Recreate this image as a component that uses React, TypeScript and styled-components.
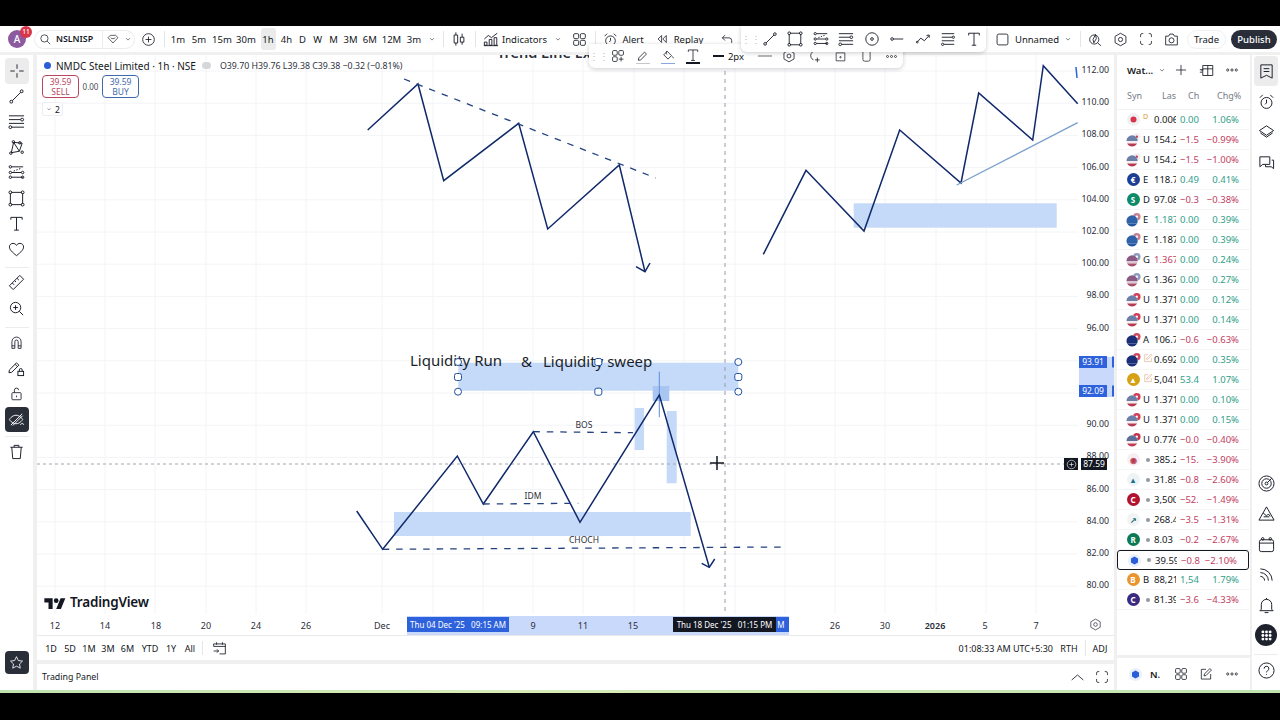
import React from 'react';
import styled, { createGlobalStyle } from 'styled-components';

const INK = '#131722';
const GREY = '#787b86';
const GREEN = '#2f9e8a';
const RED = '#c2405f';
const NAVY = '#10296b';
const ZONE = '#c5d9f8';

const GlobalStyle = createGlobalStyle`
  html, body { margin: 0; padding: 0; background: #000; }
  body { font-family: "Noto Sans", "Liberation Sans", sans-serif; color: ${INK}; }
  * { box-sizing: border-box; }
`;

const Screen = styled.div`
  position: relative;
  width: 1280px;
  height: 720px;
  display: flex;
  flex-direction: column;
  background: #000;
  overflow: hidden;
`;

const BlackBar = styled.div<{ $h: number }>`
  flex: none;
  height: ${(p) => p.$h}px;
  background: #000;
`;

const Workspace = styled.div`
  flex: none;
  height: 664px;
  display: flex;
  flex-direction: column;
  background: #f0f0f0;
`;

const GreenEdge = styled.div`
  flex: none;
  height: 3px;
  background: linear-gradient(90deg, #bfe3b0, #d9ecb8 40%, #bfe3b0);
`;

/* header */
const Header = styled.header`
  flex: none;
  height: 26px;
  display: flex;
  align-items: center;
  background: #fff;
  font-size: 9.5px;
  margin-bottom: 3px;
`;

const Slot = styled.div<{ $w: number; $left?: number }>`
  flex: none;
  width: ${(p) => p.$w}px;
  margin-left: ${(p) => p.$left ?? 0}px;
  height: 100%;
  display: flex;
  align-items: center;
  justify-content: center;
  white-space: nowrap;
`;

const Divider = styled.span`
  width: 1px;
  height: 16px;
  background: #e4e5e8;
`;

const Avatar = styled.div`
  position: relative;
  width: 18px;
  height: 18px;
  border-radius: 50%;
  background: #8b5a9f;
  color: #fff;
  font-size: 10px;
  font-weight: 500;
  display: flex;
  align-items: center;
  justify-content: center;
`;

const AvatarBadge = styled.span`
  position: absolute;
  top: -4px;
  right: -6px;
  width: 12px;
  height: 12px;
  border-radius: 50%;
  background: #d8344a;
  color: #fff;
  font-size: 6.5px;
  line-height: 12px;
  text-align: center;
`;

const SearchPill = styled.div`
  flex: none;
  width: 101px;
  height: 19px;
  display: flex;
  align-items: center;
  border: 1px solid #ececef;
  border-radius: 10px;
`;

const Symbol = styled.b`
  font-size: 8.8px;
  font-weight: 600;
  width: 46px;
`;

const PillSep = styled.span`
  width: 1px;
  height: 100%;
  background: #ececef;
`;

const TimeframeRow = styled.div`
  flex: none;
  width: 257px;
  display: flex;
  align-items: center;
`;

const Timeframe = styled.div<{ $w: number; $active?: boolean }>`
  flex: none;
  width: ${(p) => p.$w}px;
  margin: 0 ${(p) => (p.$active ? 2.5 : 0)}px;
  height: 22px;
  display: flex;
  align-items: center;
  justify-content: center;
  border-radius: 3px;
  background: ${(p) => (p.$active ? '#ebebeb' : 'transparent')};
`;

const TradePill = styled.div`
  flex: none;
  width: 39px;
  height: 19px;
  margin-left: 1px;
  border: 1px solid #eff0f2;
  border-radius: 10px;
  display: flex;
  align-items: center;
  justify-content: center;
`;

const PublishPill = styled.div`
  flex: none;
  width: 46px;
  height: 19px;
  margin-left: 5px;
  border-radius: 10px;
  background: #2a2e39;
  color: #fff;
  font-weight: 500;
  display: flex;
  align-items: center;
  justify-content: center;
`;

/* floating toolbars */
const FloatBar = styled.div<{ $x: number; $y: number; $w: number; $h: number; $z: number }>`
  position: absolute;
  left: ${(p) => p.$x}px;
  top: ${(p) => p.$y}px;
  width: ${(p) => p.$w}px;
  height: ${(p) => p.$h}px;
  z-index: ${(p) => p.$z};
  display: flex;
  align-items: center;
  background: #fff;
  border-radius: 0 0 6px 6px;
  box-shadow: 0 1px 4px rgba(19, 23, 34, 0.22);
  font-size: 9.5px;
`;

const Grip = styled.span<{ $w: number }>`
  flex: none;
  width: ${(p) => p.$w}px;
  text-align: center;
  color: #b8bac2;
  font-size: 10px;
  line-height: 6px;
`;

const BarCell = styled.div<{ $w: number }>`
  flex: none;
  width: ${(p) => p.$w}px;
  height: 100%;
  display: flex;
  align-items: center;
  justify-content: center;
  gap: 4px;
`;

const ColorTool = styled.div`
  display: flex;
  flex-direction: column;
  align-items: center;
  gap: 0;
`;

const ColorWave = styled.span<{ $color: string; $h: number }>`
  display: block;
  width: 14px;
  height: ${(p) => p.$h}px;
  background: ${(p) => p.$color};
`;

const StrokeSample = styled.span<{ $w: number; $muted?: boolean }>`
  display: block;
  width: ${(p) => p.$w}px;
  height: 2px;
  background: ${(p) => (p.$muted ? '#b4b6bc' : INK)};
`;

/* body */
const Body = styled.div`
  flex: 1;
  min-height: 0;
  display: flex;
`;

const LeftRail = styled.nav`
  flex: none;
  width: 33px;
  margin-right: 4px;
  padding-top: 3px;
  display: flex;
  flex-direction: column;
  align-items: center;
  background: #fff;
`;

const RailTool = styled.div<{ $state?: 'active' | 'dark' }>`
  flex: none;
  width: 24px;
  height: 25.5px;
  display: flex;
  align-items: center;
  justify-content: center;
  border-radius: 4px;
  background: ${(p) => (p.$state === 'active' ? '#ececec' : p.$state === 'dark' ? '#2a2e39' : 'transparent')};
  color: ${(p) => (p.$state === 'dark' ? '#fff' : INK)};
`;

const RailSep = styled.div<{ $before: number; $after: number }>`
  flex: none;
  width: 24px;
  height: 1px;
  margin: ${(p) => p.$before}px 0 ${(p) => p.$after}px;
  background: #ececee;
`;

const StarTool = styled(RailTool)`
  margin-top: auto;
  margin-bottom: 16px;
  height: 23px;
`;

const Center = styled.main`
  flex: none;
  width: 1077px;
  display: flex;
  flex-direction: column;
`;

const ChartPane = styled.section`
  flex: none;
  height: 581px;
  display: flex;
  flex-direction: column;
  background: #fff;
`;

const Canvas = styled.div`
  position: relative;
  flex: 1;
  min-height: 0;
  overflow: hidden;
`;

const ChartSvg = styled.svg`
  position: absolute;
  inset: 0;
  width: 100%;
  height: 100%;
  font-family: "Noto Sans", sans-serif;
`;

const Legend = styled.div`
  position: absolute;
  left: 5px;
  top: 4px;
  display: flex;
  flex-direction: column;
  align-items: flex-start;
`;

const LegendTitle = styled.div`
  display: flex;
  align-items: center;
  height: 13px;
  font-size: 10px;
  white-space: nowrap;
`;

const LegendDot = styled.span`
  width: 7px;
  height: 7px;
  margin: 0 5px 0 2px;
  border-radius: 50%;
  background: #2a5ed8;
`;

const LegendPill = styled.span`
  width: 9px;
  height: 7px;
  margin: 0 9px 0 6px;
  border-radius: 4px;
  background: #d6d7da;
`;

const Ohlc = styled.span`
  font-size: 8.8px;
  color: #2f3340;
`;

const QuoteRow = styled.div`
  display: flex;
  align-items: center;
  margin-top: 3px;
`;

const QuoteBox = styled.div<{ $color: string }>`
  width: 37px;
  height: 23px;
  border: 1px solid ${(p) => p.$color};
  border-radius: 4px;
  background: #fff;
  color: ${(p) => p.$color};
  font-size: 8.5px;
  line-height: 10px;
  padding-top: 1px;
  text-align: center;
`;

const QuoteSpread = styled.span`
  width: 23px;
  text-align: center;
  font-size: 8px;
  color: #4a4e5a;
`;

const Collapse = styled.div`
  display: flex;
  align-items: center;
  justify-content: center;
  gap: 2px;
  width: 21px;
  height: 14px;
  margin-top: 4px;
  border: 1px solid #eceef2;
  border-radius: 2px;
  background: #fff;
  font-size: 8.5px;
`;

const Logo = styled.div`
  position: absolute;
  left: 7px;
  bottom: 3px;
  display: flex;
  align-items: center;
  gap: 4px;
  font-size: 13.5px;
  font-weight: 600;
  letter-spacing: -0.2px;
  color: #131722;
`;

const PriceTick = styled.span`
  position: absolute;
  right: 5px;
  transform: translateY(-50%);
  font-size: 8.8px;
  color: #2a2e39;
  background: #fff;
`;

const PriceBand = styled.div`
  position: absolute;
  left: 1042px;
  width: 35px;
  top: 302px;
  height: 40px;
  background: #c9d9fb;
`;

const PriceTag = styled.span<{ $dark?: boolean; $top: number }>`
  position: absolute;
  top: ${(p) => p.$top}px;
  left: ${(p) => (p.$dark ? 1044 : 1042)}px;
  width: ${(p) => (p.$dark ? 26 : 28)}px;
  height: 12px;
  transform: translateY(-50%);
  background: ${(p) => (p.$dark ? '#131722' : '#2e62dc')};
  color: #fff;
  font-size: 8.5px;
  line-height: 12px;
  text-align: center;
`;

const PriceEdge = styled.span<{ $top: number }>`
  position: absolute;
  top: ${(p) => p.$top}px;
  left: 1075px;
  width: 2px;
  height: 11px;
  transform: translateY(-50%);
  background: #2e62dc;
`;

const PlusTag = styled.span`
  position: absolute;
  left: 1027px;
  top: 403px;
  width: 14px;
  height: 12px;
  background: #131722;
  color: #fff;
  display: flex;
  align-items: center;
  justify-content: center;
`;

const TimeAxis = styled.div`
  position: relative;
  flex: none;
  height: 22px;
  border-bottom: 1px solid #e8e9ec;
  font-size: 9px;
  color: #2a2e39;
`;

const TimeBand = styled.div`
  position: absolute;
  left: 370px;
  width: 382px;
  top: 2px;
  bottom: 0;
  background: #c9d9fb;
`;

const TimeTick = styled.span<{ $bold?: boolean }>`
  position: absolute;
  top: 11px;
  transform: translate(-50%, -50%);
  font-weight: ${(p) => (p.$bold ? 600 : 400)};
  white-space: nowrap;
`;

const TimeTag = styled.span<{ $dark?: boolean; $x: number; $w: number }>`
  position: absolute;
  left: ${(p) => p.$x}px;
  width: ${(p) => p.$w}px;
  top: 3px;
  height: 15px;
  background: ${(p) => (p.$dark ? '#131722' : '#2e62dc')};
  color: #fff;
  font-size: 8px;
  line-height: 15px;
  text-align: center;
  white-space: pre;
  overflow: hidden;
`;

const AxisGear = styled.span`
  position: absolute;
  left: 1052px;
  top: 4px;
`;

const RangeBar = styled.div`
  flex: none;
  height: 24px;
  display: flex;
  align-items: center;
  padding-left: 4.5px;
  background: #fff;
  font-size: 9px;
  margin-bottom: 4px;
`;

const RangeButton = styled.span<{ $w: number }>`
  flex: none;
  width: ${(p) => p.$w}px;
  text-align: center;
`;

const RangeSep = styled.span`
  width: 1px;
  height: 14px;
  margin: 0 9px 0 1.5px;
  background: #e4e5e8;
`;

const RangeRight = styled.div`
  margin-left: auto;
  display: flex;
  align-items: center;
  height: 100%;
  font-size: 9px;
`;

const TradingPanel = styled.div`
  flex: 1;
  display: flex;
  align-items: center;
  padding: 0 5px;
  background: #fff;
  font-size: 8.8px;
`;

const PanelActions = styled.div`
  margin-left: auto;
  display: flex;
  align-items: center;
  gap: 10px;
`;

/* watchlist */
const Watch = styled.aside`
  flex: none;
  width: 133px;
  margin-left: 3px;
  display: flex;
  flex-direction: column;
`;

const WatchMain = styled.div`
  flex: 1;
  min-height: 0;
  background: #fff;
`;

const WatchHead = styled.div`
  height: 30px;
  display: flex;
  align-items: center;
  font-size: 9.5px;
`;

const WatchTitle = styled.b`
  font-weight: 600;
`;

const WatchColumns = styled.div`
  position: relative;
  height: 25px;
  padding-bottom: 3px;
  display: flex;
  align-items: center;
  font-size: 9px;
  color: ${GREY};
  border-bottom: 1px solid #f1f2f4;
`;

const ColumnLabel = styled.span<{ $x: number }>`
  position: absolute;
  left: ${(p) => p.$x}px;
  white-space: nowrap;
`;

const Row = styled.div<{ $selected?: boolean }>`
  position: relative;
  height: 20px;
  display: grid;
  grid-template-columns: 8px 16px 13px 22px 4px 19px 1fr 11px;
  align-items: center;
  font-size: 9.5px;
  border-bottom: 1px solid #f5f6f7;
  ${(p) =>
    p.$selected
      ? `border: 1px solid #131722; border-radius: 3px; margin: 0 1px 0 0;`
      : ''}
`;

const IconCell = styled.div`
  grid-column: 2;
  display: flex;
  align-items: center;
  justify-content: center;
`;

const SymCell = styled.span`
  padding-left: 2px;
  overflow: hidden;
  white-space: nowrap;
`;

const Bullet = styled.span`
  display: block;
  width: 4px;
  height: 4px;
  margin-left: 3px;
  border-radius: 50%;
  background: #9598a1;
`;

const DelayMark = styled.sup`
  color: #d99a2b;
  font-size: 7px;
`;

const NoteMark = styled.span`
  display: block;
  color: #d9a27a;
`;

const Num = styled.span<{ $color?: string }>`
  overflow: hidden;
  white-space: nowrap;
  color: ${(p) => p.$color ?? INK};
`;

const Change = styled(Num)`
  grid-column: 6;
`;

const Pct = styled(Num)`
  grid-column: 7;
  text-align: right;
`;

const Coin = styled.span<{ $bg: string; $fg?: string }>`
  width: 13px;
  height: 13px;
  border-radius: 50%;
  background: ${(p) => p.$bg};
  color: ${(p) => p.$fg ?? '#fff'};
  font-size: 8px;
  font-weight: 700;
  line-height: 13px;
  text-align: center;
  display: flex;
  align-items: center;
  justify-content: center;
`;

const WatchFoot = styled.div`
  flex: none;
  height: 32px;
  margin-top: 3px;
  background: #fff;
  display: flex;
  align-items: center;
  font-size: 9.5px;
  font-weight: 600;
`;

const RightRail = styled.nav`
  flex: none;
  width: 28px;
  margin-left: 2px;
  padding: 1px 0 4px;
  display: flex;
  flex-direction: column;
  align-items: center;
  background: #fff;
`;

const RightTool = styled.div<{ $active?: boolean }>`
  flex: none;
  width: 24px;
  height: 30.4px;
  display: flex;
  align-items: center;
  justify-content: center;
  border-radius: 4px;
  background: ${(p) => (p.$active ? '#ececec' : 'transparent')};
`;

const RailSpacer = styled.div`
  flex: 1;
`;

const DarkCircle = styled.span`
  width: 22px;
  height: 22px;
  border-radius: 50%;
  background: #1e222d;
  color: #fff;
  display: flex;
  align-items: center;
  justify-content: center;
`;

/* icons */
const circles = (pts: number[][], r = 1.5) =>
  pts.map(([cx, cy]) => <circle key={`${cx}-${cy}`} cx={cx} cy={cy} r={r} />);

const glyphs: Record<string, React.ReactNode> = {
  crosshair: <path d="M9 1.5v5M9 11.5v5M1.5 9h5M11.5 9h5" />,
  line: <><path d="M4.5 13.5l9-9" />{circles([[3.5, 14.5], [14.5, 3.5]])}</>,
  fork: <><path d="M1 3h16M1 7h12.5M1 11h16M4 15h13" />{circles([[15, 7], [2.5, 15]])}</>,
  pattern: <><path d="M3.5 14.5L6 3.5l6 9.5 3-8.5M3.5 14.5l8.5-1.5M6 3.5l9 1" />{circles([[3, 15], [5.7, 3], [12.5, 4], [15, 14]], 1.3)}</>,
  fib: <><path d="M4 3h12M4 9h10M4 14h12" /><path d="M6 7.5l8-3" strokeDasharray="1.5 1.5" />{circles([[2.5, 3], [15.5, 9], [2.5, 9], [2.5, 14], [15.5, 14]], 1.3)}</>,
  rect: <><path d="M3.5 2.5h11M3.5 15.5h11M2.5 3.5v11M15.5 3.5v11" />{circles([[2.5, 2.5], [15.5, 2.5], [2.5, 15.5], [15.5, 15.5]])}</>,
  text: <path d="M3 5V2.5h12V5M9 2.5V16M6.5 16h5" />,
  heart: <path d="M9 15.5C4 11.5 1.5 9 1.5 6.3 1.5 4 3.3 2.5 5.3 2.5c1.5 0 2.9.8 3.7 2.2.8-1.4 2.2-2.2 3.7-2.2 2 0 3.8 1.5 3.8 3.8 0 2.7-2.5 5.2-7.5 9.2z" />,
  ruler: <path d="M1.5 12.5l11-11 4 4-11 11zM4.5 9.5l2 2M7 7l1.5 1.5M9.5 4.5l2 2" />,
  zoomIn: <><circle cx="8" cy="8" r="5.5" /><path d="M12 12l4 4M8 5.5v5M5.5 8h5" /></>,
  magnet: <path d="M3.5 16V8a5.5 5.5 0 0 1 11 0v8H11V8a2 2 0 0 0-4 0v8zM3.5 13H7M11 13h3.5" />,
  pencilLock: <><path d="M1.5 10.5L9 3l2.5 2.5L4 13l-3 .5zM7.5 4.5L10 7" /><rect x="10.5" y="12" width="6" height="4.5" /><path d="M12 12v-1.5a1.5 1.5 0 0 1 3 0V12" /></>,
  lockOpen: <><rect x="3.5" y="8" width="11" height="8.5" rx="1" /><path d="M6.5 8V5a2.5 2.5 0 0 1 5 0M9 11.5v2" /></>,
  eyeOff: <><path d="M1.5 9s2.500-4.500 7-4.500 7 4.500 7 4.500-2.500 4.500-7 4.500-7-4.500-7-4.500zM3 15L15 3M5 15.500L15.500 5" /><path d="M13 14.500c1 0 1-1.500 2-1.500s1 1.500 2 1.500" /></>,
  trash: <path d="M2.500 4.500h13M6.500 4.500v-2h5v2M4 4.500l1 12h8l1-12" />,
  star: <path d="M9 2l2.200 4.600 5 .7-3.600 3.500.9 5L9 13.400l-4.500 2.400.9-5L1.800 7.300l5-.7z" />,
  search: <><circle cx="7.500" cy="7.500" r="5" /><path d="M11.200 11.200l4.300 4.300" /></>,
  diamond: <path d="M5 3.500h8L16.500 7 9 15 1.500 7zM5.500 7c1 2 5.500 2 7 0" />,
  chevron: <path d="M5.500 7.500L9 11l3.500-3.500" />,
  chevronUp: <path d="M2 12l7-6 7 6" />,
  plusCircle: <><circle cx="9" cy="9" r="7" /><path d="M9 5.500v7M5.500 9h7" /></>,
  plus: <path d="M9 2.500v13M2.500 9h13" />,
  candles: <path d="M5.500 1.500v3M5.500 13.500v3M3.500 4.500h4v9h-4zM12.500 3v4M12.500 12.500v3M10.500 7h4v5.500h-4z" />,
  indicators: <path d="M1.500 9L6 5l3.500 2.500L16 2.500M1.500 16v-3.500h3V16zM7 16V9.500h3V16zM12.500 16V7.500h3V16zM1 16.500h16" />,
  layout: <><rect x="2" y="2" width="6" height="6" rx="1.500" /><rect x="10" y="2" width="6" height="6" rx="1.500" /><rect x="2" y="10" width="6" height="6" rx="1.500" /><rect x="10" y="10" width="6" height="6" rx="1.500" /></>,
  layoutAdd: <><rect x="2" y="2" width="6" height="6" rx="1.500" /><rect x="10" y="2" width="6" height="6" rx="1.500" /><rect x="2" y="10" width="6" height="6" rx="1.500" /><path d="M13 10v6M10 13h6" /></>,
  alarm: <><circle cx="9" cy="10.500" r="5.800" /><path d="M9 7v3.500L7.500 12M2 5l3-3M16 5l-3-3" /></>,
  replay: <path d="M8.500 4.500L4 9l4.500 4.500zM14.500 4.500L10 9l4.500 4.500z" />,
  undo: <path d="M6.500 4L3 7.500 6.500 11M3 7.500h8.500a3.500 3.500 0 0 1 3.500 3.500v3" />,
  circleDot: <><circle cx="9" cy="9" r="7" /><circle cx="9" cy="9" r="1.500" /></>,
  nodeLine: <><path d="M5 9h11" /><circle cx="3.500" cy="9" r="1.500" /></>,
  trend: <><path d="M3 12l3.500-4 4 3 5-5.500" /><path d="M13 5l3-.5v3" />{circles([[2.500, 12.500]], 1)}</>,
  hamburger: <><path d="M2 3h14M2 7h11.500M2 11h14M4.500 15H16" />{circles([[15, 7], [3, 15]], 1.300)}</>,
  square: <rect x="2.500" y="2.500" width="13" height="13" rx="2" />,
  spark: <><circle cx="7.500" cy="9" r="5.500" /><path d="M11.500 13l4 3.500M6 9l3-6 1 5-3 5z" /></>,
  hex: <><path d="M9 1.500l6.500 3.700v7.600L9 16.500l-6.500-3.700V5.200z" /><circle cx="9" cy="9" r="2.500" /></>,
  focus: <path d="M2 6.500V4a2 2 0 0 1 2-2h1.500M12.500 2H14a2 2 0 0 1 2 2v2.500M16 11.500V14a2 2 0 0 1-2 2h-1.500M5.500 16H4a2 2 0 0 1-2-2v-2.500" />,
  camera: <><path d="M2 5h3.500L7 2.500h4L12.500 5H16v10.500H2z" /><circle cx="9" cy="10" r="3" /></>,
  book: <path d="M3 2h12v14l-6-3-6 3zM6 6h6M6 9h6" />,
  layers: <path d="M9 3l7.500 5L9 13 1.500 8zM2.500 10.500L9 15l6.500-4.500" />,
  chat: <path d="M2 3h10.500v8H5l-3 2.500zM14.500 6.500h2v9l-2.500-2H8v-2" />,
  target: <><circle cx="9" cy="9" r="8" /><circle cx="9" cy="9" r="5" /><circle cx="9" cy="9" r="1.500" /><path d="M10 8l4.500-4.500" /></>,
  mountain: <path d="M1 16L9 2l8 14zM5.500 8.500l3.500 3 2-2 2 2.500M6 12.500h6" />,
  calendar: <><rect x="1.500" y="4" width="15" height="12.500" rx="2" /><path d="M1.500 7.500h15" />{circles([[5, 3], [13, 3]], 1.300)}</>,
  signal: <path d="M2.500 3A12.500 12.500 0 0 1 15 15.500M2.500 7A8.500 8.500 0 0 1 11 15.500M2.500 11A4.500 4.500 0 0 1 7 15.500" />,
  bell: <path d="M3.500 13V8a5.500 5.500 0 0 1 11 0v5l1.500 1.500H2zM7 16.500h4M9 2.500V1" />,
  help: <><circle cx="9" cy="9" r="8" /><path d="M6.500 7a2.500 2.500 0 1 1 3.500 2.300c-.7.4-1 .9-1 1.700M9 13v.8" /></>,
  dots: <>{circles([[3.500, 9], [9, 9], [14.500, 9]], 1.400)}</>,
  table: <path d="M4.500 3h12v12h-12zM4.500 7h12M10.500 3v12M1 8h4M1 11h3M3 9.500L4.500 8" />,
  edit: <path d="M9 3H3v12.500h12V9M6.500 11.500L7 9l7-7 2 2-7 7z" />,
  bucket: <path d="M8 3l5.500 5.500L9 13 3.500 7.500zM7.500 2.500c-1 1.500-1 3.500 0 4.500M14.500 9.500c.8 1.200 1.300 1.800 1.300 2.500" />,
  pencil: <path d="M3.500 11.500L11 4l2.500 2.500L6 14l-3 .5z" />,
  cycleAdd: <path d="M12 3a6 6 0 1 0-5 11M12 11v6M9 14h6" />,
  boxDot: <><path d="M3 4h12v11H3z" /><circle cx="9" cy="10" r="1" /></>,
  cup: <path d="M4 2v11a2.500 2.500 0 0 0 2.500 2.500h5A2.500 2.500 0 0 0 14 13V2" />,
  calendarGo: <path d="M2 6.500v-3h14v12H9M2 6.500h14M5.500 1.500v3M12.500 1.500v3M2 12h6M6 10l2 2-2 2" />,
  gridDots: <>{circles([[4, 4], [9, 4], [14, 4], [4, 9], [9, 9], [14, 9], [4, 14], [9, 14], [14, 14]], 2)}</>,
};

const Glyph = ({ name, size = 16, fill = false }: { name: string; size?: number; fill?: boolean }) => (
  <svg
    width={size}
    height={size}
    viewBox="0 0 18 18"
    fill={fill ? 'currentColor' : 'none'}
    stroke={fill ? 'none' : 'currentColor'}
    strokeWidth={1}
  >
    {glyphs[name]}
  </svg>
);

type Flag = 'usjp' | 'us' | 'usb' | 'eu' | 'gb' | 'au';
const flagColors: Record<Flag, { back: string; top: string; bottom: string; band: string }> = {
  usjp: { back: '#f1f1f4', top: '#6c7fa6', bottom: '#b63a52', band: '#f4eef0' },
  us: { back: '#d63a56', top: '#6c7fa6', bottom: '#b63a52', band: '#f4eef0' },
  usb: { back: '#c9304a', top: '#5c6f98', bottom: '#c23a55', band: '#f4eef0' },
  eu: { back: '#c98090', top: '#2f62a8', bottom: '#2356a0', band: '#2f62a8' },
  gb: { back: '#8c9cc0', top: '#8a5a84', bottom: '#a9506c', band: '#d9c9d4' },
  au: { back: '#d04a5e', top: '#1b2f78', bottom: '#1b2f78', band: '#1b2f78' },
};

const FlagPair = ({ kind }: { kind: Flag }) => {
  const c = flagColors[kind];
  return (
    <svg width="15" height="15" viewBox="0 0 16 16">
      <circle cx="11.500" cy="5" r="4" fill={c.back} />
      <circle cx="11.500" cy="5" r="1.300" fill={kind === 'usjp' ? '#c9304a' : '#fff'} />
      <circle cx="6.500" cy="9.500" r="6" fill="#fff" />
      <path d="M.5 9.500a6 6 0 0 1 12 0z" fill={c.top} />
      <path d="M.5 9.500h12a6 6 0 0 1-.7 2.800H1.200a6 6 0 0 1-.7-2.800z" fill={c.band} />
      <path d="M1.200 12.300h10.600a6 6 0 0 1-10.600 0z" fill={c.bottom} />
    </svg>
  );
};

type RowData = {
  icon: React.ReactNode;
  sym?: string;
  mark?: 'dot' | 'delay' | 'note';
  last: string;
  lastColor?: string;
  ch: string;
  pct: string;
  selected?: boolean;
};

const BlueHex = () => (
  <Coin $bg="#e9effc">
    <svg width="9" height="9" viewBox="0 0 18 18"><path d="M9 1l7 4v8l-7 4-7-4V5z" fill="#2a5ed8" /></svg>
  </Coin>
);

const ROWS: RowData[] = [
  { icon: <Coin $bg="#f0f0f3"><svg width="7" height="7"><circle cx="3.500" cy="3.500" r="3" fill="#d8344a" /></svg></Coin>, mark: 'delay', last: '0.006', ch: '0.00', pct: '1.06%' },
  { icon: <FlagPair kind="usjp" />, sym: 'U', last: '154.2', ch: '-1.5', pct: '-0.99%' },
  { icon: <FlagPair kind="usjp" />, sym: 'U', last: '154.2', ch: '-1.5', pct: '-1.00%' },
  { icon: <Coin $bg="#1c3f94">€</Coin>, sym: 'E', last: '118.7', ch: '0.49', pct: '0.41%' },
  { icon: <Coin $bg="#0d8a68">S</Coin>, sym: 'D', last: '97.08', ch: '-0.3', pct: '-0.38%' },
  { icon: <FlagPair kind="eu" />, sym: 'E', last: '1.187', lastColor: GREEN, ch: '0.00', pct: '0.39%' },
  { icon: <FlagPair kind="eu" />, sym: 'E', last: '1.187', ch: '0.00', pct: '0.39%' },
  { icon: <FlagPair kind="gb" />, sym: 'G', last: '1.367', lastColor: RED, ch: '0.00', pct: '0.24%' },
  { icon: <FlagPair kind="gb" />, sym: 'G', last: '1.367', ch: '0.00', pct: '0.27%' },
  { icon: <FlagPair kind="us" />, sym: 'U', last: '1.371', ch: '0.00', pct: '0.12%' },
  { icon: <FlagPair kind="us" />, sym: 'U', last: '1.371', ch: '0.00', pct: '0.14%' },
  { icon: <FlagPair kind="au" />, sym: 'A', last: '106.7', ch: '-0.6', pct: '-0.63%' },
  { icon: <FlagPair kind="au" />, mark: 'note', last: '0.692', ch: '0.00', pct: '0.35%' },
  { icon: <Coin $bg="#d6a112">▲</Coin>, mark: 'note', last: '5,041', ch: '53.4', pct: '1.07%' },
  { icon: <FlagPair kind="us" />, sym: 'U', last: '1.371', ch: '0.00', pct: '0.10%' },
  { icon: <FlagPair kind="us" />, sym: 'U', last: '1.371', ch: '0.00', pct: '0.15%' },
  { icon: <FlagPair kind="usb" />, sym: 'U', last: '0.776', ch: '-0.0', pct: '-0.40%' },
  { icon: <Coin $bg="#f8edf1" $fg="#b63a52">◉</Coin>, mark: 'dot', last: '385.2', ch: '-15.4', pct: '-3.90%' },
  { icon: <Coin $bg="#eef3f5" $fg="#1f6f8f">▴</Coin>, mark: 'dot', last: '31.89', ch: '-0.8', pct: '-2.60%' },
  { icon: <Coin $bg="#b0122f">C</Coin>, mark: 'dot', last: '3,500', ch: '-52.7', pct: '-1.49%' },
  { icon: <Coin $bg="#f1f4f5" $fg="#1f6f6f">↗</Coin>, mark: 'dot', last: '268.4', ch: '-3.5', pct: '-1.31%' },
  { icon: <Coin $bg="#0b7a54">R</Coin>, mark: 'dot', last: '8.03', ch: '-0.2', pct: '-2.67%' },
  { icon: <BlueHex />, mark: 'dot', last: '39.59', ch: '-0.8', pct: '-2.10%', selected: true },
  { icon: <Coin $bg="#e9952f">B</Coin>, sym: 'B', last: '88,21', ch: '1,54', pct: '1.79%' },
  { icon: <Coin $bg="#3b2a80">C</Coin>, mark: 'dot', last: '81.39', ch: '-3.6', pct: '-4.33%' },
];

const TIMEFRAMES: [string, number][] = [
  ['1m', 20], ['5m', 22], ['15m', 24], ['30m', 24], ['1h', 15], ['4h', 17], ['D', 15],
  ['W', 15.5], ['M', 16], ['3M', 18], ['6M', 20.5], ['12M', 23], ['3m', 22],
];

const RANGES: [string, number][] = [
  ['1D', 19], ['5D', 19], ['1M', 19], ['3M', 19], ['6M', 20], ['YTD', 25], ['1Y', 17], ['All', 21],
];

const VERTICALS = [55, 105, 155, 206, 256, 306, 382, 433, 483, 533, 583, 634, 684, 735, 785, 835, 885, 936, 986, 1036];
const PRICES = [112, 110, 108, 106, 104, 102, 100, 98, 96, 94, 92, 90, 88, 86, 84, 82, 80];
const priceY = (p: number) => 71 + ((112 - p) / 2) * 32.2;
const TIME_TICKS: [number, string, boolean?][] = [
  [55, '12'], [105, '14'], [156, '18'], [206, '20'], [256, '24'], [306, '26'], [382, 'Dec'],
  [533, '9'], [583, '11'], [633, '15'], [835, '26'], [885, '30'], [935, '2026', true], [985, '5'], [1036, '7'],
];

const Navy = styled.polyline`
  fill: none;
  stroke: ${NAVY};
  stroke-width: 1.5;
`;

const Dash = styled.line`
  stroke: #23427f;
  stroke-width: 1.3;
  stroke-dasharray: 6.5 7;
`;

const Handle = ({ x, y, square }: { x: number; y: number; square?: boolean }) =>
  square ? (
    <rect x={x - 3.5} y={y - 3.5} width="7" height="7" rx="2" fill="#fff" stroke="#1e4fa0" />
  ) : (
    <circle cx={x} cy={y} r="3.5" fill="#fff" stroke="#1e4fa0" />
  );

const ChartDrawing = () => (
  <ChartSvg viewBox="37 55 1077 559">
    <g stroke="#f3f4f7" strokeWidth="1">
      {VERTICALS.map((x) => <line key={x} x1={x} x2={x} y1="55" y2="614" />)}
      {PRICES.map((p) => <line key={p} x1="37" x2="1078" y1={priceY(p)} y2={priceY(p)} />)}
    </g>

    <text x="497" y="58" fontSize="14.5" fontWeight="600" fill="#2a2e39">Trend Line Ex</text>

    <Navy points="367.7,130 418,84 443.7,180.7 518.7,123.3 547.7,229 619.3,165 645,271.7" />
    <Navy points="636,266.7 645,271.7 650,263" />
    <Dash x1="404" y1="79" x2="655.7" y2="178" />

    <rect x="853.7" y="203.3" width="203" height="24.4" fill={ZONE} />
    <Navy points="763.3,254.3 806,170.3 864,231 899.7,130 961,183 978.7,93 1032.7,140 1043.3,65.7 1077.7,103.7" />
    <line x1="956.7" y1="185" x2="1077.7" y2="122.7" stroke="#7ba0cc" strokeWidth="1.4" />
    <line x1="1076" y1="67" x2="1077" y2="78" stroke="#2e62dc" strokeWidth="1.5" />

    <rect x="458.3" y="362.7" width="280" height="28" fill={ZONE} />
    <rect x="394" y="512" width="296.7" height="24" fill={ZONE} />
    <rect x="634.7" y="408" width="9.3" height="42" fill={ZONE} />
    <rect x="666.7" y="411" width="10" height="72.3" fill={ZONE} />
    <rect x="652.7" y="386" width="16.6" height="15" fill="#a9c6f2" />
    <line x1="659.3" y1="371.7" x2="659.3" y2="417.3" stroke="#5b8fdc" strokeWidth="1" />

    <line x1="725" y1="55" x2="725" y2="614" stroke="#9a9ca3" strokeWidth="1" strokeDasharray="4 4" />
    <line x1="37" y1="464" x2="1064" y2="464" stroke="#a4a6ac" strokeWidth="1" strokeDasharray="3 3" />

    <Navy points="356.7,511 382.7,549.3 457.3,456 483.3,504 533.3,431.7 580,522.3 659.3,395 709.3,567.3" />
    <Navy points="701.7,563.3 709.3,567.3 714.7,559" />
    <Dash x1="533.3" y1="431.7" x2="633" y2="432.7" />
    <Dash x1="483.3" y1="504" x2="578.3" y2="503.3" />
    <Dash x1="382.7" y1="549.3" x2="786.7" y2="547" />

    <g fontSize="8.5" fill="#2a2e39" textAnchor="middle">
      <text x="584" y="428">BOS</text>
      <text x="533" y="499">IDM</text>
      <text x="584" y="543">CHOCH</text>
    </g>

    <g fontSize="15" fill="#1b1f2b">
      <text x="410" y="366">Liquidity Run</text>
      <text x="521" y="367">&amp;</text>
      <text x="543" y="367">Liquidity sweep</text>
    </g>

    <Handle x={458} y={362} />
    <Handle x={458} y={377} square />
    <Handle x={458} y={391.7} />
    <Handle x={598.3} y={362} square />
    <Handle x={598.3} y={391.7} square />
    <Handle x={738.3} y={362} />
    <Handle x={738.3} y={377} square />
    <Handle x={738.3} y={391.7} />

    <path d="M717 456v14M710 463h14" stroke="#131722" strokeWidth="1.5" />
  </ChartSvg>
);

const App = () => (
  <Screen>
    <GlobalStyle />
    <BlackBar $h={26} />
    <Workspace>
      <Header>
        <Slot $w={34}>
          <Avatar>A<AvatarBadge>11</AvatarBadge></Avatar>
        </Slot>
        <SearchPill>
          <Slot $w={21}><Glyph name="search" size={13} /></Slot>
          <Symbol>NSLNISP</Symbol>
          <PillSep />
          <Slot $w={20}><Glyph name="diamond" size={12} /></Slot>
          <Slot $w={10}><Glyph name="chevron" size={10} /></Slot>
        </SearchPill>
        <Slot $w={26}><Glyph name="plusCircle" size={15} /></Slot>
        <Slot $w={7}><Divider /></Slot>
        <TimeframeRow>
          {TIMEFRAMES.map(([label, w]) => (
            <Timeframe key={label} $w={w} $active={label === '1h'}>{label}</Timeframe>
          ))}
        </TimeframeRow>
        <Slot $w={14}><Glyph name="chevron" size={10} /></Slot>
        <Slot $w={8}><Divider /></Slot>
        <Slot $w={24}><Glyph name="candles" /></Slot>
        <Slot $w={8}><Divider /></Slot>
        <Slot $w={24}><Glyph name="indicators" /></Slot>
        <Slot $w={43}>Indicators</Slot>
        <Slot $w={24}><Glyph name="chevron" size={10} /></Slot>
        <Slot $w={18}><Glyph name="layout" size={15} /></Slot>
        <Slot $w={14}><Divider /></Slot>
        <Slot $w={16}><Glyph name="alarm" size={15} /></Slot>
        <Slot $w={30}>Alert</Slot>
        <Slot $w={27}><Glyph name="replay" size={14} /></Slot>
        <Slot $w={27}>Replay</Slot>
        <Slot $w={50}><Glyph name="undo" size={14} /></Slot>
        <Slot $w={240} />
        <Slot $w={20}><Glyph name="square" size={15} /></Slot>
        <Slot $w={50}>Unnamed</Slot>
        <Slot $w={12}><Glyph name="chevron" size={10} /></Slot>
        <Slot $w={12}><Divider /></Slot>
        <Slot $w={18}><Glyph name="spark" size={15} /></Slot>
        <Slot $w={32}><Glyph name="hex" size={15} /></Slot>
        <Slot $w={20}><Glyph name="focus" size={14} /></Slot>
        <Slot $w={30}><Glyph name="camera" size={15} /></Slot>
        <TradePill>Trade</TradePill>
        <PublishPill>Publish</PublishPill>
      </Header>

      <Body>
        <LeftRail>
          <RailTool $state="active"><Glyph name="crosshair" /></RailTool>
          {['line', 'fork', 'pattern', 'fib', 'rect', 'text', 'heart'].map((n) => (
            <RailTool key={n}><Glyph name={n} size={17} /></RailTool>
          ))}
          <RailSep $before={5} $after={2} />
          <RailTool><Glyph name="ruler" size={17} /></RailTool>
          <RailTool><Glyph name="zoomIn" size={17} /></RailTool>
          <RailSep $before={6} $after={2} />
          <RailTool><Glyph name="magnet" size={15} /></RailTool>
          <RailTool><Glyph name="pencilLock" size={17} /></RailTool>
          <RailTool><Glyph name="lockOpen" size={15} /></RailTool>
          <RailTool $state="dark"><Glyph name="eyeOff" size={17} /></RailTool>
          <RailSep $before={4} $after={2} />
          <RailTool><Glyph name="trash" size={17} /></RailTool>
          <StarTool $state="dark"><Glyph name="star" size={15} /></StarTool>
        </LeftRail>

        <Center>
          <ChartPane>
            <Canvas>
              <ChartDrawing />
              <PriceBand />
              {PRICES.filter((p) => p !== 94 && p !== 92).map((p) => (
                <PriceTick key={p} style={{ top: priceY(p) - 56 }}>{p.toFixed(2)}</PriceTick>
              ))}
              <PriceTag $top={307}>93.91</PriceTag>
              <PriceTag $top={336}>92.09</PriceTag>
              <PriceEdge $top={307} />
              <PriceEdge $top={336} />
              <PlusTag><Glyph name="plusCircle" size={11} /></PlusTag>
              <PriceTag $dark $top={409}>87.59</PriceTag>
              <Legend>
                <LegendTitle>
                  <LegendDot />
                  NMDC Steel Limited · 1h · NSE
                  <LegendPill />
                  <Ohlc>O39.70 H39.76 L39.38 C39.38 −0.32 (−0.81%)</Ohlc>
                </LegendTitle>
                <QuoteRow>
                  <QuoteBox $color="#b8465f">39.59<br />SELL</QuoteBox>
                  <QuoteSpread>0.00</QuoteSpread>
                  <QuoteBox $color="#3f6aa8">39.59<br />BUY</QuoteBox>
                </QuoteRow>
                <Collapse><Glyph name="chevron" size={8} />2</Collapse>
              </Legend>
              <Logo>
                <svg width="22" height="13" viewBox="0 0 36 22" fill="#131722">
                  <path d="M14 22H7V11H0V4h14v18zM28 22h-8l7.5-18h8L28 22z" />
                  <circle cx="20" cy="8" r="4" />
                </svg>
                TradingView
              </Logo>
            </Canvas>
            <TimeAxis>
              <TimeBand />
              {TIME_TICKS.map(([x, label, bold]) => (
                <TimeTick key={label} $bold={bold} style={{ left: x - 37 }}>{label}</TimeTick>
              ))}
              <TimeTag $x={370} $w={102}>{"Thu 04 Dec '25   09:15 AM"}</TimeTag>
              <TimeTag $x={736} $w={16}>M</TimeTag>
              <TimeTag $x={636} $w={103} $dark>{"Thu 18 Dec '25   01:15 PM"}</TimeTag>
              <AxisGear><Glyph name="hex" size={13} /></AxisGear>
            </TimeAxis>
          </ChartPane>
          <RangeBar>
            {RANGES.map(([r, w]) => (
              <RangeButton key={r} $w={w}>{r}</RangeButton>
            ))}
            <RangeSep />
            <Glyph name="calendarGo" size={15} />
            <RangeRight>
              01:08:33 AM UTC+5:30
              <Slot $w={32}>RTH</Slot>
              <Divider />
              <Slot $w={28}>ADJ</Slot>
            </RangeRight>
          </RangeBar>
          <TradingPanel>
            Trading Panel
            <PanelActions>
              <Glyph name="chevronUp" size={15} />
              <Glyph name="focus" size={14} />
            </PanelActions>
          </TradingPanel>
        </Center>

        <Watch>
          <WatchMain>
            <WatchHead>
              <Slot $w={10} />
              <WatchTitle>Wat...</WatchTitle>
              <Slot $w={17}><Glyph name="chevron" size={10} /></Slot>
              <Slot $w={21}><Glyph name="plus" size={14} /></Slot>
              <Slot $w={31}><Glyph name="table" size={15} /></Slot>
              <Slot $w={20}><Glyph name="dots" size={14} /></Slot>
            </WatchHead>
            <WatchColumns>
              <ColumnLabel $x={10}>Syn</ColumnLabel>
              <ColumnLabel $x={45}>Las</ColumnLabel>
              <ColumnLabel $x={71}>Ch</ColumnLabel>
              <ColumnLabel $x={100}>Chg%</ColumnLabel>
            </WatchColumns>
            {ROWS.map((r, i) => {
              const color = r.pct.startsWith('-') ? RED : GREEN;
              return (
                <Row key={i} $selected={r.selected}>
                  <IconCell>{r.icon}</IconCell>
                  <SymCell>
                    {r.sym}
                    {r.mark === 'dot' && <Bullet />}
                    {r.mark === 'delay' && <DelayMark>D</DelayMark>}
                    {r.mark === 'note' && <NoteMark><Glyph name="edit" size={10} /></NoteMark>}
                  </SymCell>
                  <Num $color={r.lastColor}>{r.last}</Num>
                  <Change $color={color}>{r.ch.replace('-', '−')}</Change>
                  <Pct $color={color}>{r.pct.replace('-', '−')}</Pct>
                </Row>
              );
            })}
          </WatchMain>
          <WatchFoot>
            <Slot $w={30} $left={3}><BlueHex /></Slot>
            N.
            <Slot $w={19} $left={11}><Glyph name="layout" size={14} /></Slot>
            <Slot $w={32}><Glyph name="edit" size={14} /></Slot>
            <Slot $w={20}><Glyph name="dots" size={14} /></Slot>
          </WatchFoot>
        </Watch>

        <RightRail>
          <RightTool $active><Glyph name="book" size={17} /></RightTool>
          <RightTool><Glyph name="alarm" size={17} /></RightTool>
          <RightTool><Glyph name="layers" size={17} /></RightTool>
          <RightTool><Glyph name="chat" size={17} /></RightTool>
          <RailSpacer />
          <RightTool><Glyph name="target" size={17} /></RightTool>
          <RightTool><Glyph name="mountain" size={17} /></RightTool>
          <RightTool><Glyph name="calendar" size={17} /></RightTool>
          <RightTool><Glyph name="signal" size={17} /></RightTool>
          <RightTool><Glyph name="bell" size={17} /></RightTool>
          <RightTool><DarkCircle><Glyph name="gridDots" size={13} fill /></DarkCircle></RightTool>
          <RailSep $before={3} $after={1} />
          <RightTool><Glyph name="help" size={17} /></RightTool>
        </RightRail>
      </Body>
    </Workspace>
    <GreenEdge />
    <BlackBar $h={27} />

    <FloatBar $x={741} $y={26} $w={245} $h={26} $z={3}>
      <Grip $w={16}>⋮⋮</Grip>
      {['line', 'rect', 'fib', 'fork', 'circleDot', 'nodeLine', 'trend', 'hamburger', 'text'].map((n) => (
        <BarCell key={n} $w={25.5}><Glyph name={n} /></BarCell>
      ))}
    </FloatBar>

    <FloatBar $x={589} $y={44} $w={314} $h={24} $z={2}>
      <Grip $w={16}>⋮⋮</Grip>
      <BarCell $w={25}><Glyph name="layoutAdd" size={14} /></BarCell>
      <BarCell $w={25}>
        <ColorTool><Glyph name="pencil" size={14} /><ColorWave $color="#c4c6cc" $h={1} /></ColorTool>
      </BarCell>
      <BarCell $w={25}>
        <ColorTool><Glyph name="bucket" size={14} /><ColorWave $color="#8aa6dc" $h={1} /></ColorTool>
      </BarCell>
      <BarCell $w={25}>
        <ColorTool><Glyph name="text" size={14} /><ColorWave $color="#131722" $h={2} /></ColorTool>
      </BarCell>
      <BarCell $w={47}><StrokeSample $w={11} />2px</BarCell>
      <BarCell $w={26}><StrokeSample $w={14} $muted /></BarCell>
      <BarCell $w={22}><Glyph name="hex" size={14} /></BarCell>
      <BarCell $w={30}><Glyph name="cycleAdd" size={14} /></BarCell>
      <BarCell $w={20}><Glyph name="boxDot" size={13} /></BarCell>
      <BarCell $w={32}><Glyph name="cup" size={13} /></BarCell>
      <BarCell $w={18}><Glyph name="dots" size={13} /></BarCell>
    </FloatBar>
  </Screen>
);

export default App;
